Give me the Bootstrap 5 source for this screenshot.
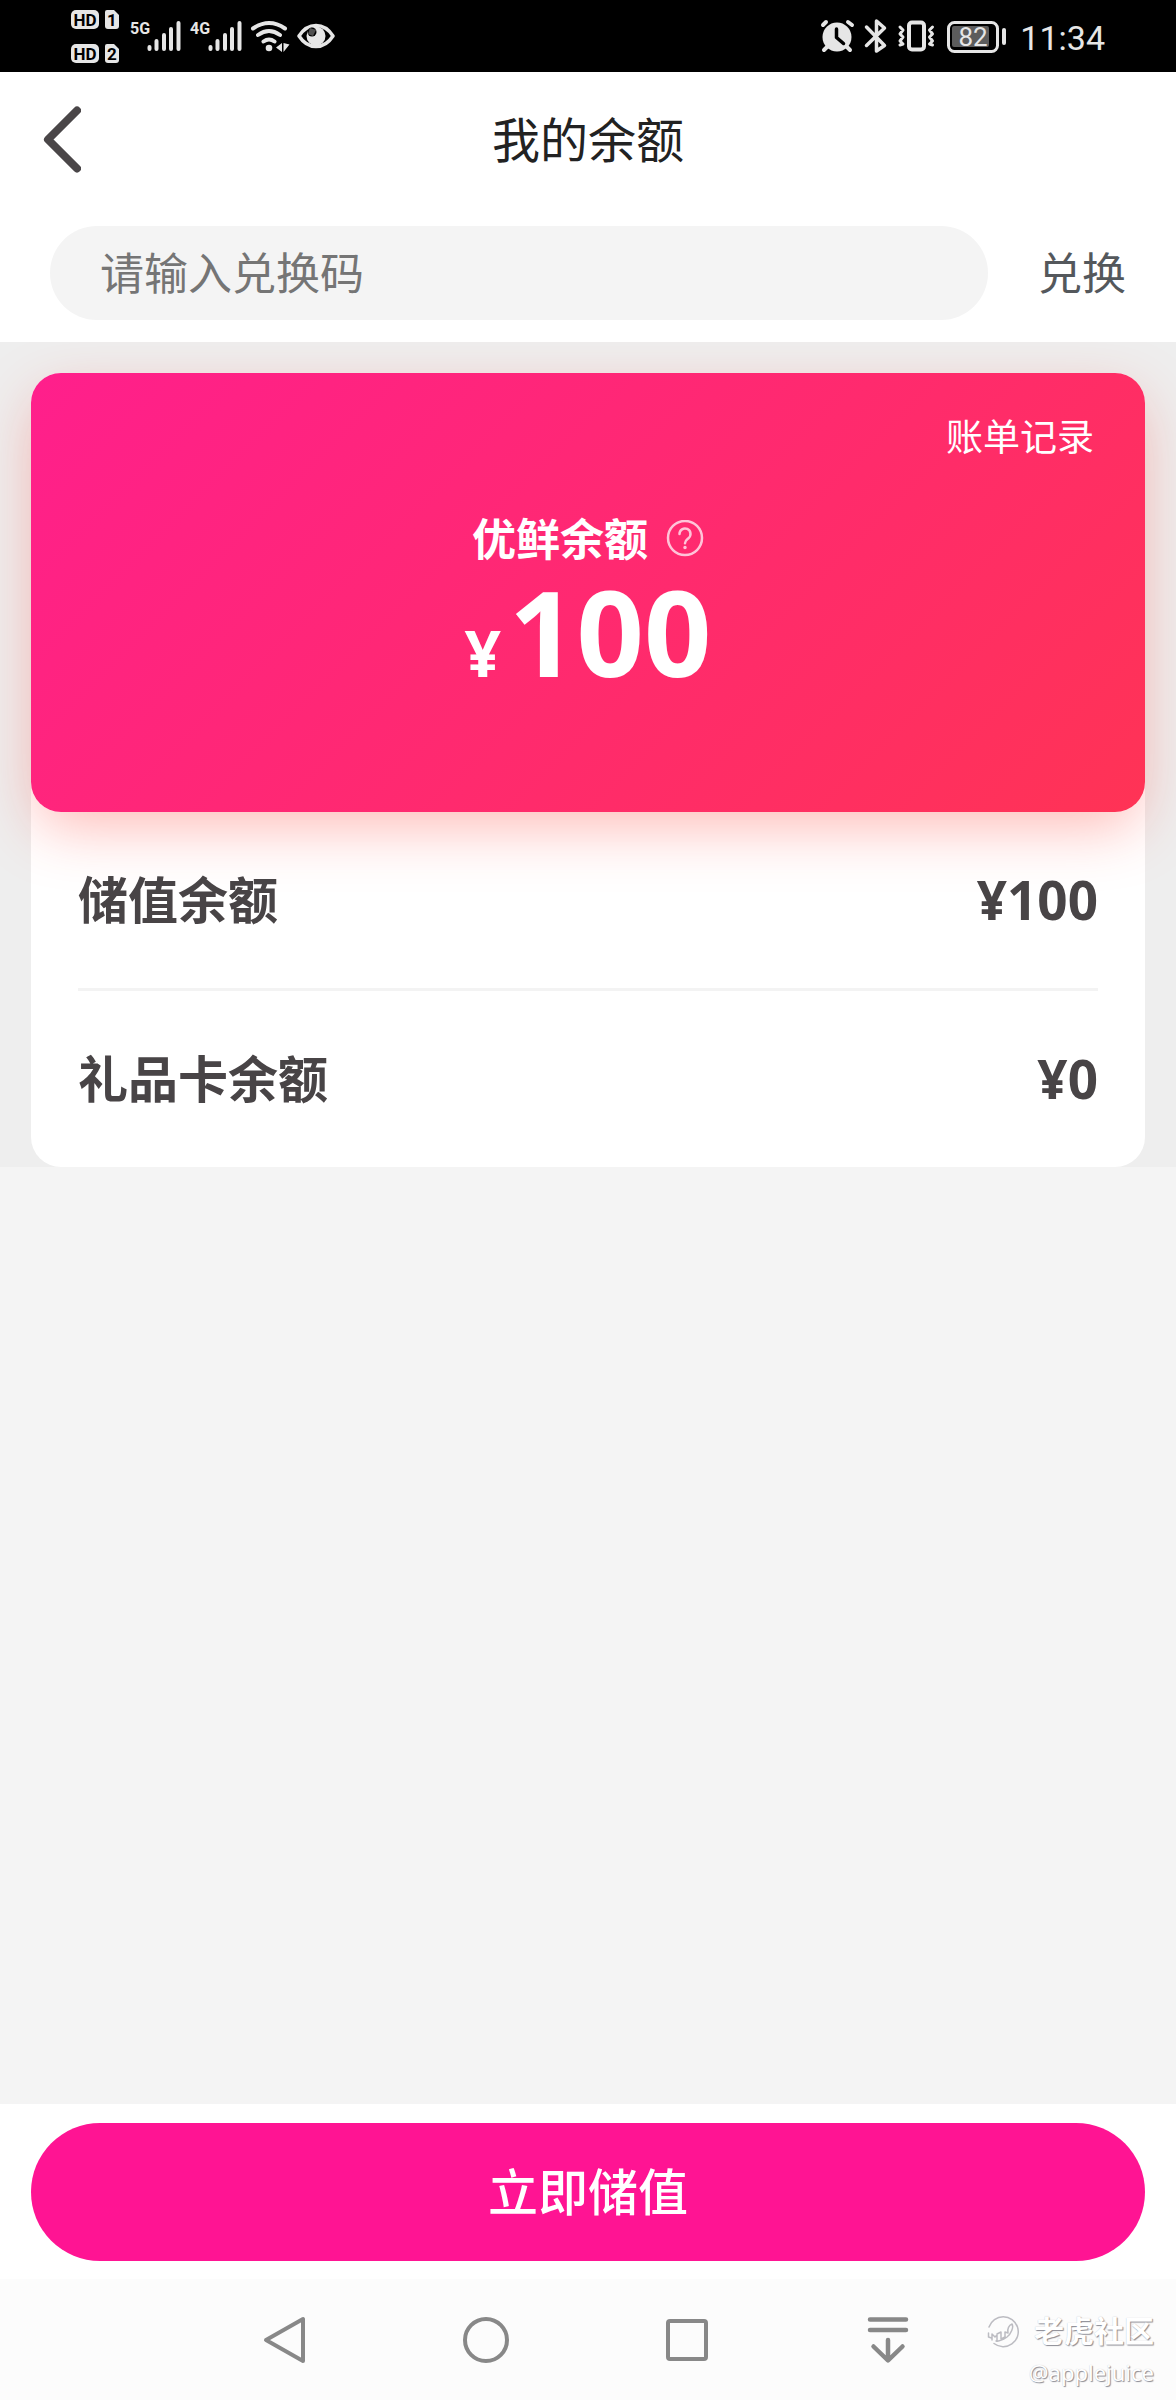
<!DOCTYPE html>
<html lang="zh-CN">
<head>
<meta charset="utf-8">
<meta name="viewport" content="width=device-width, initial-scale=1">
<title>我的余额</title>
<link href="https://cdn.jsdelivr.net/npm/bootstrap@5.3.0/dist/css/bootstrap.min.css" rel="stylesheet">
<style>
  body { font-family: "Noto Sans", "Noto Sans CJK SC", sans-serif; background: #f4f4f4; color: #484446; }
  svg { display: block; flex: none; }
  .status-bar { height: 72px; background: #000; color: #e6e6e6; padding: 0 71px; }
  .status-bar text { font-family: "Liberation Sans Narrow", Roboto, sans-serif; font-weight: 700; }
  .status-bar .battery-level { font-family: Roboto, sans-serif; font-weight: 400; }
  .clock { font-family: Roboto, sans-serif; font-size: 34px; line-height: 40px; }
  .title-bar { height: 136px; }
  .title-bar h1 { font-size: 48px; line-height: 60px; color: #222; font-weight: 400; }
  .back-link { left: 43px; top: 50%; transform: translateY(-50%); }
  .redeem-form { padding: 18px 50px 22px; gap: 50px; }
  .redeem-form .form-control { height: 94px; padding: 0 50px; font-size: 44px; background: #f4f4f4; }
  .redeem-form .form-control::placeholder { color: #757575; opacity: 1; }
  .redeem-form .btn { font-size: 44px; line-height: 60px; color: #54585c; }
  .wallet { background: #eee; padding: 31px 31px 0; }
  .wallet-sheet { border-radius: 30px; background: #fff; }
  .balance-card { border-radius: 30px; padding: 40px 51px 120px; background: linear-gradient(135deg, #ff1f8c 0%, #ff3355 100%); box-shadow: 0 20px 60px -6px rgba(255, 60, 50, .36); }
  .bill-link { font-size: 37px; line-height: 48px; }
  .balance-title { margin-top: 54px; gap: 18px; font-size: 44px; line-height: 48px; }
  .balance-amount { margin-top: 9px; font-size: 118px; line-height: 120px; gap: 8px; }
  .balance-amount .yen { font-size: 64px; line-height: 64px; }
  .balance-rows { padding: 0 47px; }
  .balance-row { height: 176px; font-size: 50px; font-weight: 700; }
  .balance-row + .balance-row { border-top: 3px solid #f3f3f3; height: 179px; }
  .balance-row dd { font-size: 53px; }
  .action-bar { padding: 19px 31px 18px; }
  .action-bar .btn { height: 138px; font-size: 50px; font-weight: 500; color: #fff; background: #ff1493; }
  .system-nav { height: 121px; padding-right: 4px; background: #fcfcfc; color: #888; }
  .system-nav button { width: 201px; color: inherit; }
  .watermark { right: 22px; top: 32px; color: #fff; text-shadow: 1px 1px 1px #8b8b93, 0 0 1px #c4c4ca; }
  .watermark-brand { gap: 14px; font-size: 30px; line-height: 40px; font-weight: 700; }
  .watermark-user { font-size: 22px; line-height: 42px; }
</style>
<script src="https://cdn.jsdelivr.net/npm/bootstrap@5.3.0/dist/js/bootstrap.bundle.min.js"></script>
</head>
<body>
<div class="d-flex flex-column min-vh-100">

  <div class="status-bar d-flex align-items-center justify-content-between">
    <svg width="264" height="72" viewBox="71 0 264 72" fill="#e6e6e6" role="img" aria-label="信号与网络状态">
      <rect x="71" y="10" width="28" height="19" rx="5"/>
      <rect x="71" y="44" width="28" height="19" rx="5"/>
      <path d="M107 10h7l5 5v11a3 3 0 0 1-3 3h-8a3 3 0 0 1-3-3V12a2 2 0 0 1 2-2z"/>
      <path d="M107 44h7l5 5v11a3 3 0 0 1-3 3h-8a3 3 0 0 1-3-3V46a2 2 0 0 1 2-2z"/>
      <g fill="#000" font-size="17" text-anchor="middle">
        <text x="85" y="26">HD</text><text x="85" y="60">HD</text>
        <text x="112" y="26">1</text><text x="112" y="60">2</text>
      </g>
      <g font-size="16"><text x="130" y="34">5G</text><text x="190" y="34">4G</text></g>
      <g stroke="#e6e6e6" stroke-width="4" stroke-linecap="round">
        <path d="M149.500 47v2M156.500 41v8M164 35v14M171 29v20M178.500 23v26"/>
        <path d="M210.500 47v2M217.500 41v8M225 35v14M232 29v20M239.500 23v26"/>
      </g>
      <g fill="none" stroke="#e6e6e6" stroke-width="4" stroke-linecap="round">
        <path d="M253 28.500q16-11 32 0M258 35q11-8 22 0M263.500 41.500q5.500-4 11 0"/>
      </g>
      <circle cx="269" cy="48" r="3.300"/>
      <path d="M282 43v9l-6-4.500zM283.500 43v9l6-7.500z"/>
      <path d="M299 36c9-14 25-14 34 0-9 14-25 14-34 0z" fill="none" stroke="#e6e6e6" stroke-width="3.500" stroke-linejoin="round"/>
      <circle cx="316" cy="36" r="9.500"/><circle cx="312" cy="32" r="4.500" fill="#000"/><path d="M310 28l6 2-3 6-5-2z" fill="#e6e6e6" opacity=".35"/>
    </svg>
    <div class="d-flex align-items-center">
      <svg width="200" height="72" viewBox="822 0 200 72" fill="none" stroke="#e6e6e6" stroke-linecap="round" stroke-linejoin="round" role="img" aria-label="闹钟 蓝牙 振动 电量82%">
        <circle cx="839" cy="37" r="14.500" fill="#e6e6e6" stroke="none"/>
        <path d="M825 25l3-3M850 22l4 3M830 46l-4 4M848 46l4 4" stroke-width="4"/>
        <path d="M838.500 29v8.500l7 6" stroke="#000" stroke-width="3.500"/>
        <path d="M868.500 27l18 18.500-8 5.500V21l8 7-18 17.500" stroke-width="3.500"/>
        <rect x="911" y="22.500" width="15" height="27" rx="3" stroke-width="4"/>
        <path d="M902 27l3 3-3 4 3 3-3 4 3 3-3 1M934.500 27l-3 3 3 4-3 3 3 4-3 3 3 1" stroke-width="3"/>
        <rect x="950.500" y="22.500" width="49" height="29" rx="6" stroke-width="3"/>
        <rect x="954" y="26" width="37" height="21" rx="2" fill="#5c5c5c" stroke="none"/>
        <path d="M1006 30v13" stroke-width="4"/>
        <text class="battery-level" x="975" y="46" font-size="26" fill="#e6e6e6" stroke="none" text-anchor="middle">82</text>
      </svg>
      <time class="clock pt-1">11:34</time>
    </div>
  </div>

  <header class="bg-white position-relative z-1">
    <div class="title-bar position-relative d-flex align-items-center justify-content-center">
      <a href="#" class="back-link position-absolute" aria-label="返回">
        <svg width="38" height="68" viewBox="0 0 38 68" fill="none" stroke="#4a4648" stroke-width="8" stroke-linecap="round" stroke-linejoin="round"><path d="M34 4.500L5 33.500l29 29"/></svg>
      </a>
      <h1 class="m-0">我的余额</h1>
    </div>
    <form class="redeem-form d-flex align-items-center">
      <input type="text" class="form-control border-0 rounded-pill flex-grow-1" placeholder="请输入兑换码" aria-label="请输入兑换码">
      <button type="button" class="btn border-0 p-0 flex-shrink-0">兑换</button>
    </form>
  </header>

  <main class="flex-grow-1">
    <section class="wallet">
      <div class="wallet-sheet">
        <div class="balance-card text-white d-flex flex-column">
          <a href="#" class="bill-link align-self-end text-white text-decoration-none">账单记录</a>
          <div class="balance-title d-flex align-items-center justify-content-center fw-bold">
            <span>优鲜余额</span>
            <button type="button" class="btn border-0 p-0" aria-label="余额说明">
              <svg width="38" height="38" viewBox="0 0 38 38" fill="none" stroke="#ffc3d8" stroke-width="2.500" stroke-linecap="round"><circle cx="19" cy="18" r="17"/><path d="M13.500 14a5.500 5.500 0 1 1 9 4.200c-2.300 1.900-3.500 2.600-3.500 5"/><circle cx="19" cy="27.500" r="1" fill="#ffc3d8" stroke-width="1.500"/></svg>
            </button>
          </div>
          <div class="balance-amount d-flex align-items-baseline justify-content-center fw-bold"><span class="yen">¥</span><span>100</span></div>
        </div>
        <dl class="balance-rows m-0">
          <div class="balance-row d-flex align-items-center justify-content-between"><dt>储值余额</dt><dd class="m-0">¥100</dd></div>
          <div class="balance-row d-flex align-items-center justify-content-between"><dt>礼品卡余额</dt><dd class="m-0">¥0</dd></div>
        </dl>
      </div>
    </section>
  </main>

  <footer>
    <div class="action-bar bg-white">
      <button type="button" class="btn w-100 border-0 rounded-pill">立即储值</button>
    </div>
    <nav class="system-nav position-relative d-flex justify-content-center" aria-label="系统导航">
      <button type="button" class="btn border-0 p-0 d-flex align-items-center justify-content-center" aria-label="返回">
        <svg width="48" height="48" viewBox="0 0 48 48" fill="none" stroke="currentColor" stroke-width="4" stroke-linejoin="round"><path d="M5 24L42 3v42z"/></svg>
      </button>
      <button type="button" class="btn border-0 p-0 d-flex align-items-center justify-content-center" aria-label="主页">
        <svg width="48" height="48" viewBox="0 0 48 48" fill="none" stroke="currentColor" stroke-width="4"><circle cx="24" cy="24" r="21"/></svg>
      </button>
      <button type="button" class="btn border-0 p-0 d-flex align-items-center justify-content-center" aria-label="最近任务">
        <svg width="48" height="48" viewBox="0 0 48 48" fill="none" stroke="currentColor" stroke-width="4"><rect x="5" y="5" width="38" height="38" rx="2"/></svg>
      </button>
      <button type="button" class="btn border-0 p-0 d-flex align-items-center justify-content-center" aria-label="下拉通知">
        <svg width="48" height="48" viewBox="0 0 48 48" fill="none" stroke="currentColor" stroke-width="4.500" stroke-linecap="round" stroke-linejoin="round"><path d="M6 3.500h36M6 14h36M24 24v20M9.500 30.500L24 44.500l14.500-14"/></svg>
      </button>
      <div class="watermark position-absolute text-end">
        <div class="watermark-brand d-flex align-items-center">
          <svg width="34" height="34" viewBox="0 0 34 34" fill="none" stroke="#bcbcc2" stroke-width="1.500" stroke-linecap="round" stroke-linejoin="round"><path d="M3 13A15 15 0 0 1 31.500 13 15 15 0 0 1 8 29.500"/><path d="M2.500 19v4l3 1M6 26v-6l3 3 2-2v6M11 20l4-2v7M15 25l4-2v-5l3 1c-1-4 1-8 4-9 2 3-1 10-5 13-3 2-7 5-11 4"/></svg>
          <span>老虎社区</span>
        </div>
        <div class="watermark-user">@applejuice</div>
      </div>
    </nav>
  </footer>
</div>
</body>
</html>
